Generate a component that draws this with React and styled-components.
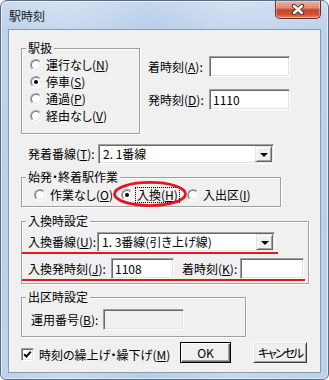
import React from 'react';
import styled, { createGlobalStyle } from 'styled-components';

const Global = createGlobalStyle`
  html, body { margin: 0; padding: 0; background: #fff; }
  body {
    font-family: "Noto Sans CJK JP", "Noto Sans", sans-serif;
    font-size: 12px;
    color: #000;
    font-feature-settings: "palt";
  }
  #root { width: 329px; height: 380px; }
  u { text-decoration: underline; text-underline-offset: 1px; }
`;

const Window = styled.div`
  width: 329px;
  height: 380px;
  box-sizing: border-box;
  border: 1px solid #5a6b82;
  border-radius: 7px 7px 6px 6px;
  background:
    linear-gradient(90deg, rgba(255,255,255,0) 0%, rgba(255,255,255,0.18) 20%, rgba(120,150,190,0.08) 45%, rgba(255,255,255,0.15) 70%, rgba(255,255,255,0) 100%),
    linear-gradient(180deg, #cadcf1 0%, #bcd2ec 8%, #b9d0ea 60%, #bcd2eb 100%);
  box-shadow: inset 0 0 0 1px rgba(255,255,255,0.55);
  display: flex;
  flex-direction: column;
  overflow: hidden;
`;

const TitleBar = styled.div`
  height: 28px;
  flex: none;
  display: flex;
  align-items: flex-start;
  padding-left: 8px;
`;

const Title = styled.span`
  margin-top: 8px;
  line-height: 14px;
  color: #1a1a1a;
`;

const CloseButton = styled.div`
  margin-left: auto;
  margin-right: 7px;
  width: 46px;
  height: 18px;
  box-sizing: border-box;
  border: 1px solid #6b2d24;
  border-top: none;
  border-radius: 0 0 5px 5px;
  background: linear-gradient(180deg, #eab0a2 0%, #dd8c78 40%, #c8442c 52%, #cf5137 80%, #e58c72 100%);
  box-shadow: inset 0 0 0 1px rgba(255,255,255,0.35);
  display: flex;
  align-items: center;
  justify-content: center;
`;

const Client = styled.div`
  margin: 0 7px;
  height: 344px;
  flex: none;
  box-sizing: border-box;
  border: 1px solid #8a9bb0;
  background: #f0f0f0;
  padding: 0 13px 0 12px;
  display: flex;
  flex-direction: column;
`;

const Section = styled.div`
  display: flex;
  align-items: flex-start;
  margin-top: ${p => p.$mt}px;
  position: relative;
`;

const GroupBox = styled.div`
  position: relative;
  box-sizing: border-box;
  width: ${p => p.$w}px;
  height: ${p => p.$h}px;
  border: 1px solid #a0a0a0;
  box-shadow: inset 1px 1px 0 #fff, 1px 1px 0 #fff;
  padding: ${p => p.$pad};
  display: flex;
  flex-direction: ${p => (p.$row ? 'row' : 'column')};
  flex: none;
`;

const GroupLabel = styled.span`
  position: absolute;
  top: -8px;
  left: 4px;
  padding: 0 2px;
  background: #f0f0f0;
  line-height: 14px;
  white-space: nowrap;
`;

const RadioItem = styled.div`
  display: flex;
  align-items: center;
  height: 17px;
  flex: none;
  width: ${p => (p.$w ? `${p.$w}px` : 'auto')};
`;

const RadioOuter = styled.span`
  width: 12px;
  height: 12px;
  box-sizing: border-box;
  border-radius: 50%;
  border: 1px solid;
  border-color: #a0a0a0 #ffffff #ffffff #a0a0a0;
  display: flex;
  align-items: center;
  justify-content: center;
  flex: none;
`;

const RadioInner = styled.span`
  width: 10px;
  height: 10px;
  box-sizing: border-box;
  border-radius: 50%;
  border: 1px solid;
  border-color: #7a7a7a #e3e3e3 #e3e3e3 #7a7a7a;
  background: #fff;
  display: flex;
  align-items: center;
  justify-content: center;
  &::after {
    content: '';
    width: 4px;
    height: 4px;
    border-radius: 50%;
    background: ${p => (p.$checked ? '#000' : 'transparent')};
  }
`;

const RadioText = styled.span`
  margin-left: 2px;
  line-height: 14px;
  white-space: nowrap;
  padding: 0 1px;
  border: 1px ${p => (p.$focus ? 'dotted #000' : 'solid transparent')};
`;

const FieldColumn = styled.div`
  display: flex;
  flex-direction: column;
  gap: 12px;
  margin-left: 8px;
  padding-top: 8px;
`;

const FieldRow = styled.div`
  display: flex;
  align-items: center;
  position: relative;
  padding-left: ${p => p.$pl || 0}px;
  margin-top: ${p => p.$mt || 0}px;
`;

const FieldLabel = styled.span`
  width: ${p => p.$w}px;
  flex: none;
  white-space: nowrap;
  line-height: 14px;
  margin-left: ${p => p.$ml || 0}px;
`;

const TextBox = styled.div`
  width: ${p => p.$w}px;
  height: 21px;
  flex: none;
  box-sizing: border-box;
  border: 1px solid;
  border-color: #a0a0a0 #ffffff #ffffff #a0a0a0;
  box-shadow: inset 1px 1px 0 #696969, inset -1px -1px 0 #e3e3e3;
  background: ${p => (p.$disabled ? '#f0f0f0' : '#ffffff')};
  padding-left: 3px;
  line-height: 19px;
  white-space: nowrap;
`;

const ComboBox = styled.div`
  width: ${p => p.$w}px;
  height: 20px;
  flex: none;
  box-sizing: border-box;
  border: 1px solid;
  border-color: #a0a0a0 #ffffff #ffffff #a0a0a0;
  box-shadow: inset 1px 1px 0 #696969, inset -1px -1px 0 #e3e3e3;
  background: #fff;
  padding: 1px 1px 1px 4px;
  display: flex;
  align-items: center;
`;

const ComboText = styled.span`
  flex: 1;
  line-height: 14px;
  white-space: nowrap;
`;

const ComboButton = styled.span`
  width: 17px;
  height: 16px;
  box-sizing: border-box;
  flex: none;
  border: 1px solid;
  border-color: #e3e3e3 #696969 #696969 #e3e3e3;
  box-shadow: inset 1px 1px 0 #fff, inset -1px -1px 0 #a0a0a0;
  background: #f0f0f0;
  display: flex;
  align-items: center;
  justify-content: center;
  &::after {
    content: '';
    width: 0;
    height: 0;
    border-left: 4px solid transparent;
    border-right: 4px solid transparent;
    border-top: 4px solid #000;
    margin-top: 1px;
  }
`;

const RedLine = styled.span`
  position: absolute;
  left: ${p => p.$left}px;
  top: ${p => p.$top}px;
  width: ${p => p.$w}px;
  height: 2px;
  background: #e51521;
`;

const RedEllipse = styled.svg`
  position: absolute;
  left: 91px;
  top: 3px;
  overflow: visible;
`;

const BottomRow = styled.div`
  display: flex;
  align-items: center;
  height: 21px;
  margin-top: 5px;
`;

const CheckLabel = styled.div`
  display: flex;
  align-items: center;
  margin-top: 4px;
`;

const CheckBox = styled.span`
  width: 13px;
  height: 13px;
  box-sizing: border-box;
  flex: none;
  border: 1px solid;
  border-color: #a0a0a0 #ffffff #ffffff #a0a0a0;
  box-shadow: inset 1px 1px 0 #696969, inset -1px -1px 0 #e3e3e3;
  background: #fff;
  display: flex;
  align-items: center;
  justify-content: center;
`;

const CheckText = styled.span`
  margin-left: 5px;
  line-height: 14px;
  white-space: nowrap;
`;

const PushButton = styled.div`
  width: ${p => p.$w}px;
  height: 21px;
  box-sizing: border-box;
  flex: none;
  margin-left: ${p => p.$ml};
  background: #f0f0f0;
  border: 1px solid;
  border-color: ${p => (p.$default ? '#000' : '#ffffff #404040 #404040 #ffffff')};
  box-shadow: ${p =>
    p.$default
      ? 'inset 1px 1px 0 #fff, inset -1px -1px 0 #696969, inset -2px -2px 0 #a0a0a0'
      : 'inset 1px 1px 0 #e3e3e3, inset -1px -1px 0 #a0a0a0'};
  display: flex;
  align-items: center;
  justify-content: center;
  line-height: 14px;
  white-space: nowrap;
  letter-spacing: ${p => p.$ls || 0}px;
`;

const Radio = ({ checked, children, w, focus }) => (
  <RadioItem $w={w}>
    <RadioOuter>
      <RadioInner $checked={checked} />
    </RadioOuter>
    <RadioText $focus={focus}>{children}</RadioText>
  </RadioItem>
);

const Combo = ({ w, children }) => (
  <ComboBox $w={w}>
    <ComboText>{children}</ComboText>
    <ComboButton />
  </ComboBox>
);

export default function App() {
  return (
    <>
      <Global />
      <Window>
        <TitleBar>
          <Title>駅時刻</Title>
          <CloseButton>
            <svg width="14" height="11" viewBox="0 0 14 11">
              <path d="M3 2 L11 9 M11 2 L3 9" stroke="#3a2a2a" strokeWidth="4.2" strokeLinecap="round" />
              <path d="M3 2 L11 9 M11 2 L3 9" stroke="#ffffff" strokeWidth="2.4" strokeLinecap="round" />
            </svg>
          </CloseButton>
        </TitleBar>

        <Client>
          <Section $mt={18}>
            <GroupBox $w={119} $h={86} $pad="7px 0 0 8px">
              <GroupLabel>駅扱</GroupLabel>
              <Radio>運行なし(<u>N</u>)</Radio>
              <Radio checked>停車(<u>S</u>)</Radio>
              <Radio>通過(<u>P</u>)</Radio>
              <Radio>経由なし(<u>V</u>)</Radio>
            </GroupBox>
            <FieldColumn>
              <FieldRow>
                <FieldLabel $w={61}>着時刻(<u>A</u>):</FieldLabel>
                <TextBox $w={81} />
              </FieldRow>
              <FieldRow>
                <FieldLabel $w={61}>発時刻(<u>D</u>):</FieldLabel>
                <TextBox $w={81}>1110</TextBox>
              </FieldRow>
            </FieldColumn>
          </Section>

          <Section $mt={10}>
            <FieldRow $pl={7}>
              <FieldLabel $w={70}>発着番線(<u>T</u>):</FieldLabel>
              <Combo w={176}>2. 1番線</Combo>
            </FieldRow>
          </Section>

          <Section $mt={13}>
            <GroupBox $w={260} $h={30} $pad="8px 0 0 12px" $row>
              <GroupLabel>始発・終着駅作業</GroupLabel>
              <Radio w={87}>作業なし(<u>O</u>)</Radio>
              <Radio w={66} checked focus>入換(<u>H</u>)</Radio>
              <Radio>入出区(<u>I</u>)</Radio>
              <RedEllipse width="74" height="26" viewBox="0 0 74 26">
                <ellipse cx="37" cy="13" rx="35.5" ry="11.6" fill="none" stroke="#e51521" strokeWidth="2.8" />
              </RedEllipse>
            </GroupBox>
          </Section>

          <Section $mt={14}>
            <GroupBox $w={288} $h={63} $pad="10px 0 0 0">
              <GroupLabel>入換時設定</GroupLabel>
              <FieldRow $pl={6}>
                <FieldLabel $w={69}>入換番線(<u>U</u>):</FieldLabel>
                <Combo w={178}>1. 3番線(引き上げ線)</Combo>
                <RedLine $left={0} $top={20} $w={256} />
              </FieldRow>
              <FieldRow $pl={6} $mt={6}>
                <FieldLabel $w={83}>入換発時刻(<u>J</u>):</FieldLabel>
                <TextBox $w={63}>1108</TextBox>
                <FieldLabel $w={58} $ml={8}>着時刻(<u>K</u>):</FieldLabel>
                <TextBox $w={64} />
                <RedLine $left={0} $top={21} $w={283} />
              </FieldRow>
            </GroupBox>
          </Section>

          <Section $mt={13}>
            <GroupBox $w={225} $h={40} $pad="11px 0 0 0">
              <GroupLabel>出区時設定</GroupLabel>
              <FieldRow $pl={9}>
                <FieldLabel $w={72}>運用番号(<u>B</u>):</FieldLabel>
                <TextBox $w={81} $disabled />
              </FieldRow>
            </GroupBox>
          </Section>

          <BottomRow>
            <CheckLabel>
              <CheckBox>
                <svg width="9" height="9" viewBox="0 0 9 9">
                  <path d="M1.2 4.2 L3.4 6.6 L7.8 1.6" fill="none" stroke="#000" strokeWidth="2" />
                </svg>
              </CheckBox>
              <CheckText>時刻の繰上げ・繰下げ(<u>M</u>)</CheckText>
            </CheckLabel>
            <PushButton $w={51} $ml="auto" $default>OK</PushButton>
            <PushButton $w={54} $ml="22px" $ls={-2}>キャンセル</PushButton>
          </BottomRow>
        </Client>
      </Window>
    </>
  );
}
